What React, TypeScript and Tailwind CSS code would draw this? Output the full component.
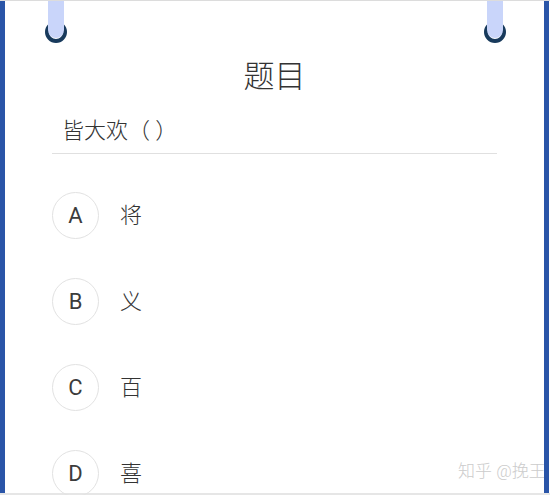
import React from "react";

const font = { fontFamily: 'Roboto, "Noto Sans CJK SC", sans-serif' };

function Ring({ className }: { className: string }) {
  return (
    <div className={`absolute top-0 w-[24px] h-[44px] ${className}`}>
      <div className="absolute left-[1px] top-[20px] w-[22px] h-[22px] rounded-full border-[4px] border-[#183a5c]" />
      <div className="absolute left-[4px] top-0 w-[16px] h-[37px] rounded-b-full bg-[#c9d5fa]" />
    </div>
  );
}

const options = [
  { k: "A", v: "将" },
  { k: "B", v: "义" },
  { k: "C", v: "百" },
  { k: "D", v: "喜" },
];

export default function App() {
  return (
    <div
      className="relative w-[550px] h-[495px] overflow-hidden bg-white border-t border-[#dcdcdc] text-[#333333] font-light"
      style={font}
    >
      <div className="flex h-[492px]">
        <div className="w-[5px] bg-[#2a55a8]" />
        <div className="flex-1 flex flex-col">
          <div className="pt-[58px] text-center text-[31px] leading-[36px]">题目</div>
          <div className="mt-[21px] mx-[47px]">
            <div className="pl-[10px] text-[22px] leading-[30px]">皆大欢（ ）</div>
            <div className="mt-[7px] h-[1px] bg-[#e0e0e0]" />
          </div>
          <div className="mt-[38px] ml-[47px] flex flex-col gap-[39px]">
            {options.map((o) => (
              <div key={o.k} className="flex items-center">
                <div className="w-[47px] h-[47px] rounded-full border-[1.5px] border-[#e2e2e2] flex items-center justify-center text-[22px] font-normal text-[#3c3c3c]">
                  {o.k}
                </div>
                <div className="ml-[21px] text-[22px]">{o.v}</div>
              </div>
            ))}
          </div>
        </div>
        <div className="w-[5px] bg-[#2a55a8]" />
        <div className="w-[1px]" />
      </div>
      <div className="h-[3px] bg-[#e6e6e6]" />
      <Ring className="left-[44px]" />
      <Ring className="left-[483px]" />
      <div className="absolute left-[458px] top-[459px] w-[86px] overflow-hidden whitespace-nowrap text-[17px] leading-[22px] text-[#cccccc]">
        知乎 @挽王
      </div>
    </div>
  );
}
